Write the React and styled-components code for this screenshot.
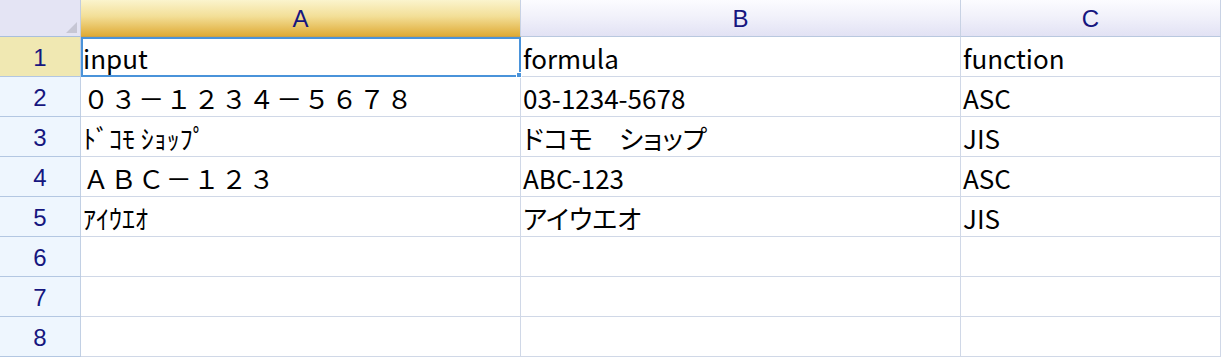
import React from 'react';
import styled, { createGlobalStyle } from 'styled-components';

const Global = createGlobalStyle`
  html, body { margin: 0; padding: 0; background: #fff; }
  body { font-family: "Noto Sans CJK JP", "Noto Sans", sans-serif; }
`;

const Sheet = styled.div`
  display: grid;
  grid-template-columns: 81px 440px 440px 260px;
  grid-template-rows: 37px repeat(8, 40px);
  width: 1221px;
`;

const Corner = styled.div`
  position: relative;
  box-sizing: border-box;
  background: #e4e4f4;
  border-right: 1px solid #c2cde0;
  border-bottom: 1px solid #a9bfdc;
  &::after {
    content: '';
    position: absolute;
    right: 3px;
    bottom: 3px;
    width: 0;
    height: 0;
    border-left: 11px solid transparent;
    border-bottom: 11px solid #c6c6d4;
  }
`;

const ColHeader = styled.div`
  box-sizing: border-box;
  display: flex;
  align-items: center;
  justify-content: center;
  padding-top: 1px;
  font-family: "Liberation Sans", Arial, sans-serif;
  font-size: 24px;
  color: #16167f;
  border-right: 1px solid #c8d2e4;
  border-bottom: 1px solid ${p => (p.$selected ? '#c9a24a' : '#b9c8df')};
  background: ${p =>
    p.$selected
      ? 'linear-gradient(#fbf4cd 0%, #f3df98 45%, #dfab36 100%)'
      : 'linear-gradient(#fcfcff 0%, #f0f0fa 50%, #e2e2f4 100%)'};
`;

const RowHeader = styled.div`
  box-sizing: border-box;
  display: flex;
  align-items: center;
  justify-content: center;
  padding-top: 2px;
  font-family: "Liberation Sans", Arial, sans-serif;
  font-size: 24px;
  color: #16167f;
  background: ${p => (p.$selected ? '#f0e8b2' : '#eef6fe')};
  border-right: 1px solid #c2d0e4;
  border-bottom: 1px solid #b3c7e2;
`;

const Cell = styled.div`
  position: relative;
  box-sizing: border-box;
  display: flex;
  align-items: center;
  padding: 2px 0 0 2px;
  font-size: 26px;
  color: #000;
  white-space: pre;
  overflow: hidden;
  letter-spacing: ${p => (p.$wide ? '1.6px' : '0')};
  font-feature-settings: ${p => (p.$palt ? '"palt"' : 'normal')};
  border-right: 1px solid #d0d8e7;
  border-bottom: 1px solid #d0d8e7;
`;

const ActiveCell = styled(Cell)`
  overflow: visible;
`;

const Selection = styled.div`
  position: absolute;
  top: 0;
  left: 0;
  right: -1px;
  bottom: -1px;
  border: 2px solid #4a93da;
  pointer-events: none;
  z-index: 2;
`;

const FillHandle = styled.div`
  position: absolute;
  right: -3px;
  bottom: -3px;
  width: 4px;
  height: 4px;
  background: #4a93da;
  border: 1px solid #fff;
`;

// input column keeps full-width pitch; converted columns use proportional kana
const rows = [
  ['input', 'formula', 'function'],
  ['０３－１２３４－５６７８', '03-1234-5678', 'ASC'],
  ['ﾄﾞｺﾓ ｼｮｯﾌﾟ', 'ドコモ　ショップ', 'JIS'],
  ['ＡＢＣ－１２３', 'ABC-123', 'ASC'],
  ['ｱｲｳｴｵ', 'アイウエオ', 'JIS'],
  ['', '', ''],
  ['', '', ''],
  ['', '', ''],
];

const isFullWidthAlnum = s => /[０-９Ａ-Ｚ－]/.test(s);

const App = () => (
  <>
    <Global />
    <Sheet>
      <Corner />
      <ColHeader $selected>A</ColHeader>
      <ColHeader>B</ColHeader>
      <ColHeader>C</ColHeader>
      {rows.map((r, i) => (
        <React.Fragment key={i}>
          <RowHeader $selected={i === 0}>{i + 1}</RowHeader>
          {r.map((v, j) =>
            i === 0 && j === 0 ? (
              <ActiveCell key={j}>
                {v}
                <Selection>
                  <FillHandle />
                </Selection>
              </ActiveCell>
            ) : (
              <Cell key={j} $wide={isFullWidthAlnum(v)} $palt={j > 0}>
                {v}
              </Cell>
            )
          )}
        </React.Fragment>
      ))}
    </Sheet>
  </>
);

export default App;
